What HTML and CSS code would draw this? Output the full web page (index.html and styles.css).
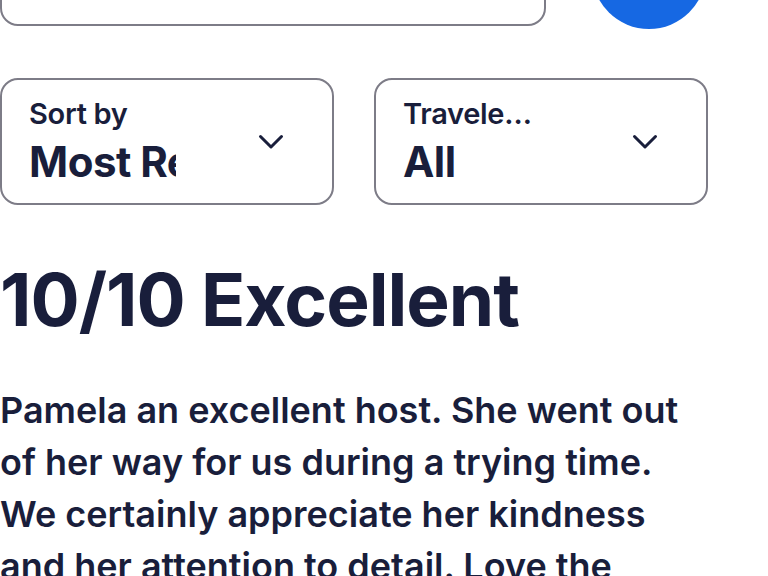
FILE: index.html
```html
<!DOCTYPE html>
<html lang="en">
<head>
    <meta charset="UTF-8">
    <meta name="viewport" content="width=device-width, initial-scale=1.0">
    <title>Reviews</title>
    <link rel="stylesheet" href="styles.css">
</head>
<body>
    <div class="search-row">
        <div class="search-box"></div>
        <button class="search-button" type="button" aria-label="Search"></button>
    </div>

    <div class="filters">
        <div class="filter">
            <div class="filter-text">
                <span class="filter-label">Sort by</span>
                <span class="filter-value clip">Most Recent</span>
            </div>
            <svg class="chevron" width="26" height="16" viewBox="0 0 26 16">
                <path d="M2.5 2.5 L13 13 L23.5 2.5" fill="none" stroke="#191e3b" stroke-width="3" stroke-linecap="round" stroke-linejoin="round"/>
            </svg>
        </div>
        <div class="filter">
            <div class="filter-text">
                <span class="filter-label ellipsis">Traveler type</span>
                <span class="filter-value">All</span>
            </div>
            <svg class="chevron" width="26" height="16" viewBox="0 0 26 16">
                <path d="M2.5 2.5 L13 13 L23.5 2.5" fill="none" stroke="#191e3b" stroke-width="3" stroke-linecap="round" stroke-linejoin="round"/>
            </svg>
        </div>
    </div>

    <div class="review">
        <h1 class="review-title">10/10 Excellent</h1>
        <p class="review-body">Pamela an excellent host. She went out of her way for us during a trying time. We certainly appreciate her kindness and her attention to detail. Love the place and would stay again.</p>
    </div>
</body>
</html>
```

FILE: styles.css
```css
:root {
    --ink: #191e3b;
    --line: #7d7c87;
    --blue: #1668e3;
}

body {
    font-family: Inter, Roboto, sans-serif;
    color: var(--ink);
    background: #fff;
    margin: 0;
    overflow: hidden;
}

.search-row {
    display: flex;
    align-items: flex-end;
    gap: 46px;
    margin-top: -85px;
}

.search-box {
    width: 546px;
    height: 100px;
    box-sizing: border-box;
    border: 2px solid var(--line);
    border-radius: 18px;
}

.search-button {
    width: 114px;
    height: 114px;
    margin-bottom: -3px;
    border: none;
    border-radius: 50%;
    background: var(--blue);
    padding: 0;
}

.filters {
    display: flex;
    gap: 40px;
    margin-top: 52px;
}

.filter {
    width: 334px;
    height: 127px;
    box-sizing: border-box;
    border: 2px solid var(--line);
    border-radius: 18px;
    display: flex;
    align-items: center;
    justify-content: space-between;
    padding: 0 48px 0 27px;
}

.filter-text {
    display: flex;
    flex-direction: column;
    gap: 3px;
    width: 147px;
    padding-top: 3px;
}

.filter-label {
    font-size: 29px;
    font-weight: 600;
    line-height: 34px;
    letter-spacing: -0.3px;
    white-space: nowrap;
}

.filter-value {
    font-size: 42px;
    font-weight: 700;
    line-height: 56px;
    letter-spacing: -0.5px;
    white-space: nowrap;
}

.clip {
    overflow: hidden;
}

.ellipsis {
    max-width: 136px;
    overflow: hidden;
    text-overflow: ellipsis;
}

.chevron {
    display: block;
}

.review-title {
    font-size: 73px;
    font-weight: 700;
    line-height: 88px;
    letter-spacing: -1px;
    margin: 51px 0 0;
}

.review-body {
    font-size: 36px;
    font-weight: 600;
    line-height: 52px;
    margin: 40px 0 0;
    width: 700px;
}
```
